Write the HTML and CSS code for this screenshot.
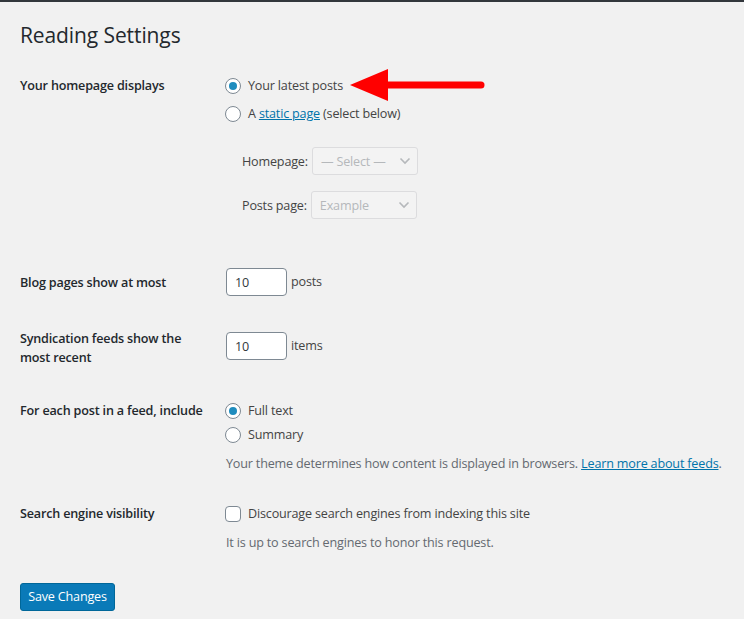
FILE: index.html
```html
<!DOCTYPE html>
<html lang="en">
<head>
<meta charset="utf-8">
<title>Reading Settings</title>
<link rel="stylesheet" href="styles.css">
</head>
<body>
<div class="topbar"></div>
<div class="wrap">
  <h1 class="title">Reading Settings</h1>

  <div class="row row-home">
    <div class="label">Your homepage displays</div>
    <div class="field">
      <div class="opt">
        <span class="radio checked"></span><span>Your latest posts</span>
        <svg class="arrow" width="140" height="36" viewBox="0 0 140 36" aria-hidden="true">
          <line x1="34" y1="18" x2="131" y2="18" stroke="#ff0000" stroke-width="7" stroke-linecap="round"/>
          <polygon points="0,18 38,2 38,34" fill="#ff0000"/>
        </svg>
      </div>
      <div class="opt opt-next">
        <span class="radio"></span><span>A <a href="#" class="link">static page</a> (select below)</span>
      </div>
      <div class="sub">
        <div class="subrow">
          <span class="sublabel">Homepage:</span>
          <span class="select select-home">— Select —<svg class="chev" width="12" height="8" viewBox="0 0 12 8"><path d="M1.5 1.5 L6 6 L10.5 1.5" fill="none" stroke="#b5b8bb" stroke-width="1.6"/></svg></span>
        </div>
        <div class="subrow subrow-next">
          <span class="sublabel">Posts page:</span>
          <span class="select select-posts">Example<svg class="chev" width="12" height="8" viewBox="0 0 12 8"><path d="M1.5 1.5 L6 6 L10.5 1.5" fill="none" stroke="#b5b8bb" stroke-width="1.6"/></svg></span>
        </div>
      </div>
    </div>
  </div>

  <div class="row row-blog">
    <div class="label label-mid">Blog pages show at most</div>
    <div class="field inline">
      <span class="input">10</span><span>posts</span>
    </div>
  </div>

  <div class="row row-synd">
    <div class="label label-two">Syndication feeds show the most recent</div>
    <div class="field inline field-synd">
      <span class="input">10</span><span>items</span>
    </div>
  </div>

  <div class="row row-feed">
    <div class="label">For each post in a feed, include</div>
    <div class="field">
      <div class="opt"><span class="radio checked"></span><span>Full text</span></div>
      <div class="opt opt-tight"><span class="radio"></span><span>Summary</span></div>
      <p class="desc">Your theme determines how content is displayed in browsers. <a href="#" class="link">Learn more about feeds</a>.</p>
    </div>
  </div>

  <div class="row row-search">
    <div class="label">Search engine visibility</div>
    <div class="field">
      <div class="opt"><span class="checkbox"></span><span>Discourage search engines from indexing this site</span></div>
      <p class="desc">It is up to search engines to honor this request.</p>
    </div>
  </div>

  <button class="btn" type="button">Save Changes</button>
</div>
</body>
</html>
```

FILE: styles.css
```css
* { box-sizing: border-box; }

html, body {
  margin: 0;
  padding: 0;
}

body {
  background: #f1f1f1;
  font-family: "Open Sans", "Noto Sans", "Liberation Sans", sans-serif;
  font-size: 12.6px;
  letter-spacing: -0.18px;
  color: #444;
  overflow: hidden;
}

.topbar {
  height: 2px;
  background: #32373c;
}

.wrap {
  padding-left: 20px;
}

.title {
  margin: 19px 0 0;
  font-size: 21px;
  font-weight: 400;
  letter-spacing: -0.1px;
  line-height: 29px;
  color: #23282d;
}

.row {
  display: grid;
  grid-template-columns: 188px 1fr;
  column-gap: 18px;
}

.row-home { margin-top: 26px; }
.row-blog { margin-top: 49px; }
.row-synd { margin-top: 33px; }
.row-feed { margin-top: 34px; }
.row-search { margin-top: 30px; }

.label {
  font-weight: 600;
  color: #23282d;
  line-height: 20px;
}

.label-mid { padding-top: 5px; }

.label-two { line-height: 19px; }

.field-synd { padding-top: 3px; }

.opt {
  position: relative;
  display: flex;
  align-items: center;
  gap: 7px;
  height: 20px;
  line-height: 20px;
  margin-left: -1px;
  white-space: nowrap;
}

.opt-next { margin-top: 8px; }
.opt-tight { margin-top: 4px; }

.radio {
  width: 16px;
  height: 16px;
  border: 1px solid #7e8993;
  border-radius: 50%;
  background: #fff;
  display: flex;
  align-items: center;
  justify-content: center;
  flex: none;
}

.radio.checked::after {
  content: "";
  width: 8px;
  height: 8px;
  border-radius: 50%;
  background: #1e8cbe;
}

.checkbox {
  width: 16px;
  height: 16px;
  border: 1px solid #7e8993;
  border-radius: 4px;
  background: #fff;
  flex: none;
}

.arrow {
  position: absolute;
  left: 125px;
  top: -9px;
}

.link {
  color: #0073aa;
  text-decoration: underline;
}

.sub {
  margin-top: 23px;
  padding-left: 16px;
}

.subrow {
  display: flex;
  align-items: center;
  gap: 4px;
  height: 28px;
}

.subrow-next { margin-top: 16px; }

.sublabel {
  color: #444;
}

.select {
  display: inline-flex;
  align-items: center;
  justify-content: space-between;
  height: 28px;
  width: 106px;
  padding: 0 6px 0 8px;
  border: 1px solid #dcdcde;
  border-radius: 3px;
  background: #f3f3f3;
  color: #b5b8bb;
}

.inline {
  display: flex;
  align-items: flex-start;
  gap: 4px;
}

.inline > span:last-child {
  line-height: 28px;
}

.input {
  display: inline-flex;
  align-items: center;
  width: 61px;
  height: 28px;
  padding: 0 8px;
  border: 1px solid #7e8993;
  border-radius: 4px;
  background: #fff;
  color: #32373c;
}

.desc {
  margin: 9px 0 0;
  line-height: 20px;
  color: #646970;
  white-space: nowrap;
}

.btn {
  display: block;
  margin-top: 30px;
  height: 28px;
  width: 95px;
  padding: 0;
  border: 1px solid #006799;
  border-radius: 3px;
  background: #0a7ab8;
  color: #fff;
  font-family: inherit;
  font-size: 12.6px;
  letter-spacing: -0.18px;
  line-height: 26px;
  cursor: pointer;
}
```
